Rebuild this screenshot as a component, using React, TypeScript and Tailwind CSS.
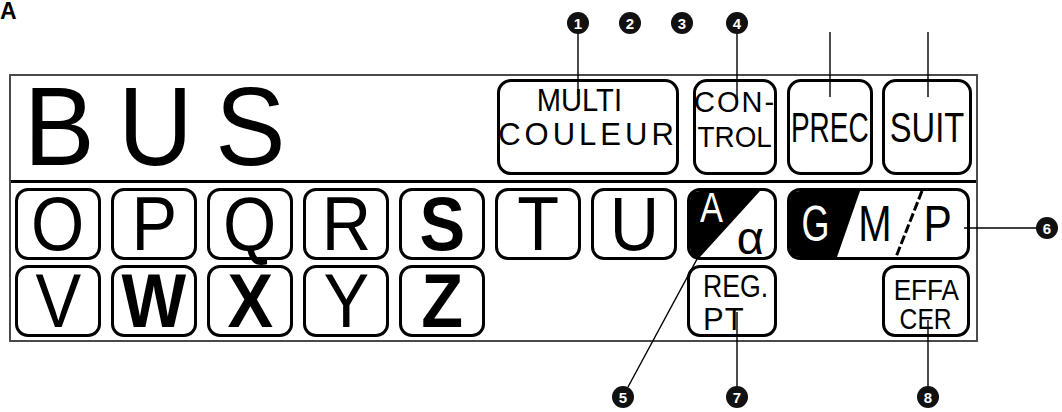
import React from "react";

// Key caps on the LCD keyboard
const row1 = [
  { c: "O", bold: false },
  { c: "P", bold: false },
  { c: "Q", bold: false },
  { c: "R", bold: false },
  { c: "S", bold: true },
  { c: "T", bold: false },
  { c: "U", bold: false },
];

const row2 = [
  { c: "V", bold: false },
  { c: "W", bold: true },
  { c: "X", bold: true },
  { c: "Y", bold: false },
  { c: "Z", bold: true },
];

function Key({ children, className = "" }: { children?: React.ReactNode; className?: string }) {
  return (
    <div className={`relative flex h-[72px] shrink-0 rounded-[13px] border-[3px] border-black ${className}`}>
      {children}
    </div>
  );
}

function LetterKey({ c, bold }: { c: string; bold: boolean }) {
  return (
    <Key className="w-[86px] items-center justify-center">
      <span
        className={`inline-block text-[76px] leading-[60px] scale-x-[0.9] ${bold ? "font-bold" : "font-normal"}`}
      >
        {c}
      </span>
    </Key>
  );
}

// callout markers drawn over the screen
const callouts = [
  { n: "1", x: 578, y: 23 },
  { n: "2", x: 630, y: 23 },
  { n: "3", x: 682, y: 23 },
  { n: "4", x: 737, y: 23 },
  { n: "6", x: 1047, y: 228 },
  { n: "5", x: 623, y: 397 },
  { n: "7", x: 737, y: 397 },
  { n: "8", x: 928, y: 397 },
];

const leaders = [
  [578, 33, 578, 95],
  [737, 33, 737, 100],
  [830, 32, 830, 97],
  [928, 32, 928, 97],
  [964, 228, 1037, 228],
  [703, 248, 628, 387],
  [737, 312, 737, 387],
  [928, 320, 928, 387],
];

export default function App() {
  return (
    <div className="relative h-[412px] w-[1062px] overflow-hidden bg-white font-['Liberation_Sans',Arial,sans-serif] text-black">
      <div className="h-[74px]">
        <span className="block text-[23px] font-bold leading-[22px]">A</span>
      </div>

      {/* LCD frame */}
      <div className="ml-[9px] flex h-[268px] w-[969px] flex-col border-2 border-[#4a4a4a]">
        {/* title + function buttons */}
        <div className="flex h-[104px] items-start">
          <div className="ml-[19px] mt-[6px] flex text-[112px] font-normal leading-[90px]">
            <span className="inline-flex w-[58px] justify-center">
              <span className="inline-block scale-x-[0.95]">B</span>
            </span>
            <span className="ml-[38px] inline-flex w-[58px] justify-center">
              <span className="inline-block scale-x-[0.92]">U</span>
            </span>
            <span className="ml-[36px] inline-flex w-[60px] justify-center">
              <span className="inline-block scale-x-[0.94]">S</span>
            </span>
          </div>

          <div className="ml-[217px] mt-[3px] flex h-[96px] w-[182px] shrink-0 flex-col items-center rounded-[14px] border-[3px] border-black pt-[2px] text-[31px] leading-[34px]">
            <span className="inline-block pr-[18px]">
              <span className="inline-block scale-x-[0.94]">MULTI</span>
            </span>
            <span className="inline-block tracking-[4px]">COULEUR</span>
          </div>

          <div className="ml-[14px] mt-[3px] flex h-[96px] w-[84px] shrink-0 flex-col items-center rounded-[14px] border-[3px] border-black pt-[3px] text-[29px] leading-[35px]">
            <span className="inline-block tracking-[2px]">CON-</span>
            <span className="inline-block scale-x-[0.96]">TROL</span>
          </div>

          <div className="ml-[10px] mt-[3px] flex h-[96px] w-[86px] shrink-0 items-center justify-center rounded-[14px] border-[3px] border-black text-[43px] leading-none">
            <span className="inline-block scale-x-[0.65]">PREC</span>
          </div>

          <div className="ml-[9px] mt-[3px] flex h-[96px] w-[90px] shrink-0 items-center justify-center rounded-[14px] border-[3px] border-black text-[43px] leading-none">
            <span className="inline-block scale-x-[0.76]">SUIT</span>
          </div>
        </div>

        <div className="h-[3px] bg-black" />

        {/* row 1 */}
        <div className="mt-[5px] flex gap-[10px] pl-[4px]">
          {row1.map((k) => (
            <LetterKey key={k.c} c={k.c} bold={k.bold} />
          ))}

          <Key className="w-[90px] flex-col justify-between pb-[10px] pt-[2px]">
            <svg className="absolute inset-0" width="84" height="66" viewBox="0 0 84 66">
              <path d="M10,0 L70,0 L10,66 Q0,66 0,56 L0,10 Q0,0 10,0 Z" fill="#000" />
            </svg>
            <span className="relative ml-[10px] inline-block origin-left scale-x-[0.82] text-[42px] leading-[30px] text-white">
              A
            </span>
            <span className="relative mr-[10px] self-end text-[47px] leading-[30px]">α</span>
          </Key>

          <Key className="w-[183px] items-center">
            <svg className="absolute inset-0" width="177" height="66" viewBox="0 0 177 66">
              <path d="M10,0 L70,0 L47,66 L10,66 Q0,66 0,56 L0,10 Q0,0 10,0 Z" fill="#000" />
              <line x1="132" y1="0" x2="106" y2="66" stroke="#000" strokeWidth="3" strokeDasharray="9 3" />
            </svg>
            <span className="relative ml-[10px] inline-flex w-[30px] justify-center text-[50px] leading-[50px] text-white">
              <span className="inline-block scale-x-[0.72]">G</span>
            </span>
            <span className="relative ml-[25px] inline-flex w-[40px] justify-center text-[50px] leading-[50px]">
              <span className="inline-block scale-x-[0.8]">M</span>
            </span>
            <span className="relative ml-[25px] inline-flex w-[35px] justify-center text-[50px] leading-[50px]">
              <span className="inline-block scale-x-[0.85]">P</span>
            </span>
          </Key>
        </div>

        {/* row 2 */}
        <div className="mt-[5px] flex pl-[4px]">
          <div className="flex gap-[10px]">
            {row2.map((k) => (
              <LetterKey key={k.c} c={k.c} bold={k.bold} />
            ))}
          </div>

          <Key className="ml-[202px] w-[90px] flex-col items-start pl-[13px] pt-[2px] text-[31px] leading-[33px]">
            <span className="inline-block origin-left scale-x-[0.86]">REG.</span>
            <span className="inline-block tracking-[1px]">PT</span>
          </Key>

          <Key className="ml-[105px] w-[88px] flex-col items-center pt-[8px] text-[29px] leading-[29px]">
            <span className="inline-block scale-x-[0.9]">EFFA</span>
            <span className="inline-block scale-x-[0.85]">CER</span>
          </Key>
        </div>
      </div>

      {/* callouts */}
      <svg className="pointer-events-none absolute left-0 top-0" width="1062" height="412" viewBox="0 0 1062 412">
        {leaders.map(([x1, y1, x2, y2], i) => (
          <line key={i} x1={x1} y1={y1} x2={x2} y2={y2} stroke="#000" strokeWidth="1.4" />
        ))}
        {callouts.map((c) => (
          <g key={c.n}>
            <circle cx={c.x} cy={c.y} r="11" fill="#111" />
            <text
              x={c.x}
              y={c.y + 5.5}
              textAnchor="middle"
              fontSize="15"
              fontWeight="700"
              fill="#fff"
              fontFamily="Liberation Sans, Arial, sans-serif"
            >
              {c.n}
            </text>
          </g>
        ))}
      </svg>
    </div>
  );
}
